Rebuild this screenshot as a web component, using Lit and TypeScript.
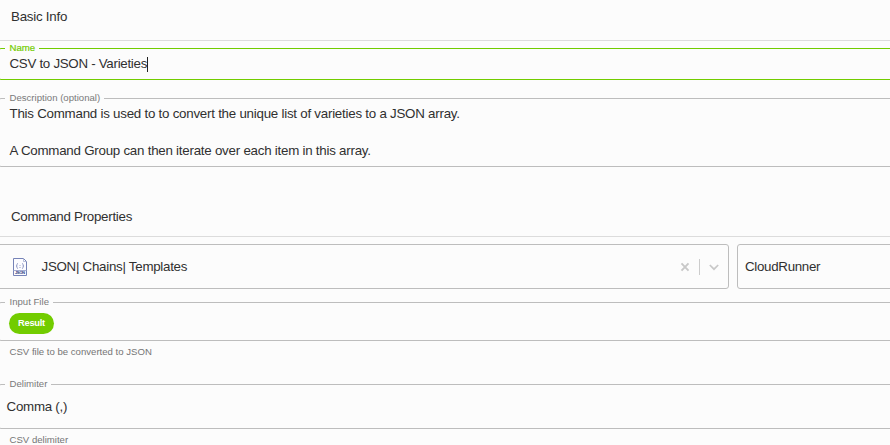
import { LitElement, html, css } from "lit";
import { customElement, property } from "lit/decorators.js";

@customElement("form-field")
class FormField extends LitElement {
  @property() label = "";
  static styles = css`
    :host { display: block; box-sizing: border-box; }
    .box { box-sizing: border-box; height: 100%; margin: 0 -6px 0 -2px; min-width: 0; padding: 0 0 0 6px; border: 1px solid #bdbdbd; border-radius: 3px; }
    .legend { padding: 0 0 0 4.5px; height: 11px; line-height: 10px; font-size: 9.6px; color: #7a7a7a; white-space: nowrap; letter-spacing: 0; box-sizing: border-box; width: var(--label-width, auto); }
    :host([active]) .box { border-color: #72cc00; }
    :host([active]) .legend { color: #72cc00; -webkit-text-stroke: 0.2px #72cc00; }
  `;
  render() {
    return html`<fieldset class="box"><legend class="legend">${this.label}</legend><slot></slot></fieldset>`;
  }
}

@customElement("app-root")
class AppRoot extends LitElement {
  static styles = css`
    :host { display: block; height: 445px; overflow: hidden; background: #fcfcfc; color: #303030; font: 13.33px/18px "Liberation Sans", Arial, sans-serif; letter-spacing: -0.24px; white-space: nowrap; }
    .heading { box-sizing: border-box; padding-left: 11px; border-bottom: 1px solid #dcdcdc; }
    .basic { height: 41px; padding-top: 8px; }
    .command { height: 38px; margin-top: 32px; padding-top: 9px; letter-spacing: -0.27px; }
    .name { height: 37px; margin-top: 2px; --label-width: 34px; }
    .name .value { display: flex; align-items: center; height: 20px; padding-left: 4.5px; letter-spacing: -0.29px; }
    .caret { width: 1px; height: 15px; background: #222; }
    .description { height: 74px; margin-top: 13px; --label-width: 99px; }
    .description .value { padding: 1px 0 0 4.5px; line-height: 18.5px; white-space: pre; }
    .selects { display: flex; gap: 8px; margin: 7px -8px 0 -4px; height: 45px; }
    .select { box-sizing: border-box; border: 1px solid #bdbdbd; border-radius: 3px; display: flex; align-items: center; }
    .template { width: 733px; padding: 0 9px 0 15px; }
    .runner { flex: 1; padding-left: 7px; letter-spacing: -0.3px; }
    .select-label { flex: 1; padding-left: 13.5px; letter-spacing: -0.27px; }
    .divider { width: 1px; height: 16px; background: #ccc; margin: 0 9px 0 9px; }
    .input { height: 44px; margin-top: 8px; --label-width: 48px; }
    .chip { display: block; box-sizing: border-box; margin: 5px 0 0 4px; width: 45px; height: 21px; border-radius: 11px; background: #72cc00; color: #fff; font-size: 9.3px; font-weight: 700; line-height: 20px; letter-spacing: -0.25px; text-align: center; }
    .hint { height: 13px; line-height: 13px; padding-left: 9.5px; font-size: 9.6px; letter-spacing: 0; color: #757575; }
    .input-hint { margin-top: 4px; }
    .delimiter { height: 50px; margin-top: 21px; --label-width: 46px; }
    .delimiter .value { padding: 8px 0 0 1.5px; letter-spacing: -0.25px; }
    .delimiter-hint { margin-top: 4px; }
    svg { display: block; flex: none; }
  `;
  render() {
    return html`
      <div class="heading basic">Basic Info</div>
      <form-field class="name" label="Name" active>
        <div class="value"><span>CSV to JSON - Varieties</span><span class="caret"></span></div>
      </form-field>
      <form-field class="description" label="Description (optional)">
        <div class="value">This Command is used to to convert the unique list of varieties to a JSON array.<br><br>A Command Group can then iterate over each item in this array.</div>
      </form-field>
      <div class="heading command">Command Properties</div>
      <div class="selects">
        <div class="select template">
          <svg width="16" height="20" viewBox="0 0 16 20" fill="none">
            <path d="M1.5 1.5h10l3 3v14h-13z" fill="#fcfcff" stroke="#7683b7"/>
            <path d="M11.5 1.5v3h3" stroke="#a4add0" stroke-width=".8"/>
            <path d="M6 6.5c-1 0-1 .7-1 1.5s-.3 1-1 1c.7 0 1 .3 1 1s0 1.5 1 1.5M10 6.5c1 0 1 .7 1 1.5s.3 1 1 1c-.7 0-1 .3-1 1s0 1.5-1 1.5M8 8v.8M8 10v1" stroke="#8791bf" stroke-width=".9"/>
            <path d="M1.5 13.5h13" stroke="#a3acd0"/>
            <text x="3" y="17.4" font-family="Liberation Sans" font-size="4.2" font-weight="700" letter-spacing="0" textLength="10" fill="#294183">JSON</text>
          </svg>
          <span class="select-label">JSON| Chains| Templates</span>
          <svg width="10" height="10" viewBox="0 0 10 10"><path d="M1.5 1.3l7 7.4M8.5 1.3L1.5 8.7" stroke="#c8c8c8" stroke-width="1.9"/></svg>
          <span class="divider"></span>
          <svg width="10" height="10" viewBox="0 0 10 10"><path d="M.8 3L5 7.2 9.2 3" fill="none" stroke="#c8c8c8" stroke-width="1.7"/></svg>
        </div>
        <div class="select runner">CloudRunner</div>
      </div>
      <form-field class="input" label="Input File"><span class="chip">Result</span></form-field>
      <div class="hint input-hint">CSV file to be converted to JSON</div>
      <form-field class="delimiter" label="Delimiter"><div class="value">Comma (,)</div></form-field>
      <div class="hint delimiter-hint">CSV delimiter</div>
    `;
  }
}
